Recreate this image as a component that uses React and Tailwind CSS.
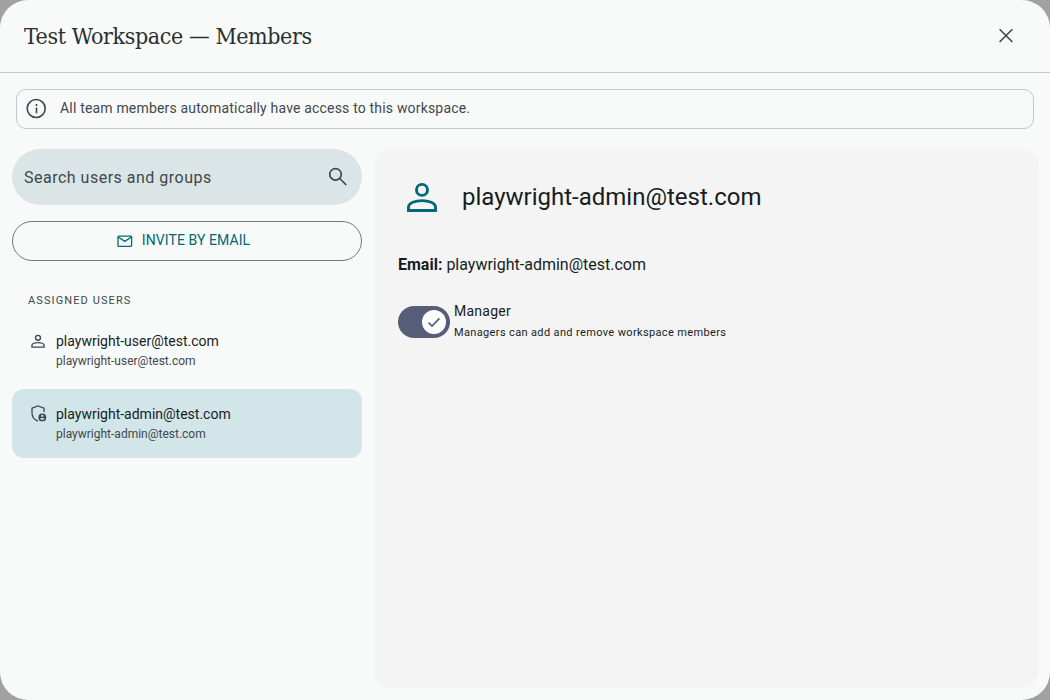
import { useState } from 'react'

const USERS = [
  { email: 'playwright-user@test.com', manager: false },
  { email: 'playwright-admin@test.com', manager: true }
]

function CloseIcon() {
  return (
    <svg className="size-6" viewBox="0 0 24 24" fill="none" stroke="currentColor" strokeWidth="1.6">
      <path d="M5.6 5.2 18.4 18M18.4 5.2 5.6 18" />
    </svg>
  )
}

function InfoIcon() {
  return (
    <svg className="size-6 shrink-0" viewBox="0 0 24 24" fill="none" stroke="currentColor" strokeWidth="1.6">
      <circle cx="12.2" cy="11.5" r="9" />
      <path d="M12.5 10.6v5.6" />
      <path d="M12.5 7.1v1.8" strokeWidth="1.7" />
    </svg>
  )
}

function SearchIcon() {
  return (
    <svg className="size-6 shrink-0" viewBox="0 0 24 24" fill="none" stroke="currentColor" strokeWidth="1.7">
      <circle cx="9.5" cy="9.3" r="5.75" />
      <path d="M13.7 13.5 20.3 20" />
    </svg>
  )
}

function MailIcon() {
  return (
    <svg className="size-[18px] shrink-0" viewBox="0 0 18 18" fill="none" stroke="currentColor" strokeWidth="1.3">
      <rect x="2" y="4.2" width="13.6" height="10.2" rx="0.8" />
      <path d="M2.2 5 8.8 9.4 15.4 5" />
    </svg>
  )
}

function PersonIcon({ className, strokeWidth }) {
  return (
    <svg className={className} viewBox="0 0 40 40" fill="none" stroke="currentColor" strokeWidth={strokeWidth}>
      <circle cx="20" cy="12.9" r="5.5" />
      <path d="M6.5 33.5V30.2C6.5 25.8 13.5 23.6 20 23.6S33.5 25.8 33.5 30.2V33.5Z" />
    </svg>
  )
}

function ShieldPersonIcon() {
  return (
    <svg className="size-5 shrink-0" viewBox="0 0 20 20" fill="none" stroke="currentColor" strokeWidth="1.3">
      <path d="M10 18.2C6.3 16.9 4 13.6 4 9.8V5.1L10 2.9 16 5.1V9" />
      <circle cx="14.3" cy="14.4" r="3.9" fill="currentColor" stroke="none" />
      <circle cx="14.3" cy="12.9" r="1.15" fill="#d3e5e9" stroke="none" />
      <path d="M12 15.7C12.8 14.8 15.8 14.8 16.6 15.7 15.8 17 12.8 17 12 15.7Z" fill="#d3e5e9" stroke="none" />
    </svg>
  )
}

function UserRow({ user, selected, onSelect }) {
  return (
    <button
      onClick={onSelect}
      className={
        'flex w-full items-start pl-4 pt-[14px] text-left rounded-xl ' +
        (selected ? 'h-[69px] bg-[#d2e5e9]' : 'h-[73px]')
      }
    >
      <span className="flex w-7 text-[#3f484a]">
        {user.manager
          ? <ShieldPersonIcon />
          : <PersonIcon className="ml-[1px] mt-[2px] size-[18px] shrink-0" strokeWidth="3" />}
      </span>
      <span className="block">
        <span className="block text-sm leading-[22px] text-[#171d1e]">{user.email}</span>
        <span className="block text-xs leading-[18px] text-[#3f484a]">{user.email}</span>
      </span>
    </button>
  )
}

function App() {

  const [selected, setSelected] = useState(1)
  const [manager, setManager]   = useState(true)

  const user = USERS[selected]

  return (
    <div className="h-screen bg-[#a1a1a1] font-['Roboto',sans-serif] text-[#171d1e]">
      <div className="flex h-full flex-col overflow-hidden rounded-[28px] bg-[#f8faf9]">

        <header className="flex h-[73px] shrink-0 items-center justify-between border-b border-[#bfc8ca] pl-6 pr-8">
          <h1 className="font-['Roboto_Slab','DejaVu_Serif_Condensed','DejaVu_Serif',serif] text-[23px] font-light tracking-[-0.4px] text-[#2a3031]">
            Test Workspace — Members
          </h1>
          <button aria-label="Close" className="text-[#3f484a]">
            <CloseIcon />
          </button>
        </header>

        <div className="mx-4 mt-4 flex h-10 shrink-0 items-center rounded-[10px] border border-[#bfc8ca] pl-[7px] text-[#3f484a]">
          <InfoIcon />
          <p className="ml-3 pb-[2px] text-sm tracking-[0.18px]">
            All team members automatically have access to this workspace.
          </p>
        </div>

        <div className="mt-5 flex min-h-0 flex-1 gap-3 px-3 pb-3">

          <aside className="w-[350px] shrink-0">
            <label className="flex h-14 items-center justify-between rounded-full bg-[#dbe4e6] pl-3 pr-3 text-[#3f484a]">
              <span className="pt-[2px] text-base tracking-[0.5px]">Search users and groups</span>
              <SearchIcon />
            </label>

            <button className="mt-4 flex h-10 w-full items-center justify-center gap-2 rounded-full border border-[#6f797a] pr-2 text-[#006876]">
              <MailIcon />
              <span className="pb-[2px] text-sm tracking-[0.08px]">INVITE BY EMAIL</span>
            </button>

            <h2 className="mt-8 pl-4 text-[11px] leading-4 tracking-[1.1px] text-[#3f484a]">
              ASSIGNED USERS
            </h2>

            <div className="mt-[7px]">
              {USERS.map(function(item, index) {
                return (
                  <UserRow
                    key={item.email}
                    user={item}
                    selected={index === selected}
                    onSelect={function() { setSelected(index) }}
                  />
                )
              })}
            </div>
          </aside>

          <main className="flex-1 rounded-2xl bg-[#f4f4f4] px-6 pt-6">
            <div className="flex h-12 items-center">
              <PersonIcon className="ml-1 size-10 text-[#006876]" strokeWidth="2.9" />
              <h2 className="ml-5 text-2xl">{user.email}</h2>
            </div>

            <p className="mt-8 text-base leading-6">
              <strong className="font-bold">Email:</strong> {user.email}
            </p>

            <div className="mt-6 flex items-center">
              <button
                role="switch"
                aria-checked={manager}
                onClick={function() { setManager(!manager) }}
                className={
                  'mt-[2px] flex h-8 w-[52px] items-center rounded-full px-1 ' +
                  (manager ? 'justify-end bg-[#565d79]' : 'justify-start bg-[#bfc8ca]')
                }
              >
                <span className="flex size-6 items-center justify-center rounded-full bg-white text-[#565d79]">
                  <svg className="size-4" viewBox="0 0 16 16" fill="none" stroke="currentColor" strokeWidth="1.7">
                    <path d="M2.6 8.6 6 12 13.4 4.4" />
                  </svg>
                </span>
              </button>
              <div className="ml-1">
                <p className="text-sm leading-5 tracking-[0.25px]">Manager</p>
                <p className="mt-1 text-[11px] leading-4 tracking-[0.36px]">
                  Managers can add and remove workspace members
                </p>
              </div>
            </div>
          </main>

        </div>
      </div>
    </div>
  )
}

export default App
